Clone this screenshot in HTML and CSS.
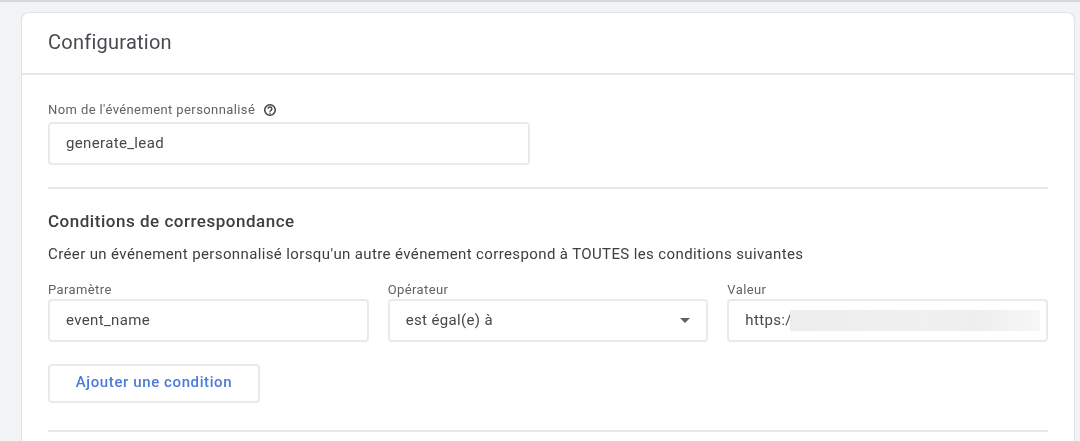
FILE: index.html
```html
<!DOCTYPE html>
<html lang="fr">
<head>
    <meta charset="UTF-8">
    <title>Configuration</title>
    <link rel="stylesheet" href="styles.css">
</head>
<body>
    <div class="card">
        <h2 class="card-title">Configuration</h2>

        <div class="card-body">
            <section class="section section-name">
                <div class="field field-name">
                    <div class="field-label">
                        Nom de l'événement personnalisé
                        <svg class="help-icon" viewBox="0 0 24 24" width="14" height="14" aria-hidden="true">
                            <circle cx="12" cy="12" r="9" fill="none" stroke="#3c4043" stroke-width="2.6"/>
                            <path d="M8.8 10a3.2 3.2 0 1 1 4.9 2.7c-1 .6-1.7 1.1-1.7 2.3" fill="none" stroke="#3c4043" stroke-width="2.4"/>
                            <circle cx="12" cy="17.4" r="1.3" fill="#3c4043"/>
                        </svg>
                    </div>
                    <div class="input">generate_lead</div>
                </div>
            </section>

            <section class="section section-match">
                <h3 class="section-title">Conditions de correspondance</h3>
                <p class="section-desc">Créer un événement personnalisé lorsqu'un autre événement correspond à TOUTES les conditions suivantes</p>

                <div class="condition-row">
                    <div class="field">
                        <div class="field-label">Paramètre</div>
                        <div class="input">event_name</div>
                    </div>
                    <div class="field">
                        <div class="field-label">Opérateur</div>
                        <div class="input input-select">
                            est égal(e) à
                            <span class="caret"></span>
                        </div>
                    </div>
                    <div class="field">
                        <div class="field-label">Valeur</div>
                        <div class="input input-value">
                            https:/,
                            <span class="redacted"></span>
                        </div>
                    </div>
                </div>

                <button class="btn" type="button">Ajouter une condition</button>
            </section>
        </div>
    </div>
</body>
</html>
```

FILE: styles.css
```css
*{
    box-sizing: border-box;
}

html, body{
    height: 100%;
}

body{
    margin: 0;
    padding: 12px 5px 0 21px;
    background: #f1f3f4;
    border-top: 2px solid #d6d8db;
    font-family: Roboto, "Liberation Sans", sans-serif;
    color: #3c4043;
    overflow: hidden;
}

.card{
    height: 440px;
    margin-top: -2px;
    background: #fff;
    border: 1px solid #e0e2e5;
    border-bottom: none;
    border-radius: 8px 8px 0 0;
    filter: blur(.35px);
}

.card-title{
    margin: 0;
    height: 62px;
    padding: 0 26px;
    border-bottom: 2px solid #e6e8ea;
    font-size: 20px;
    font-weight: 400;
    line-height: 59px;
    letter-spacing: .25px;
    color: #474b50;
}

.card-body{
    padding: 0 26px;
}

.section{
    border-bottom: 2px solid #e6e8ea;
}

.section-name{
    height: 114px;
    padding-top: 26px;
}

.section-match{
    height: 243px;
    padding-top: 22px;
}

.field-name{
    width: 482px;
}

.field-label{
    display: flex;
    align-items: flex-start;
    gap: 8px;
    height: 21px;
    font-size: 13px;
    line-height: 18px;
    letter-spacing: .4px;
    color: #5f6368;
}

.help-icon{
    display: block;
    margin-top: 2px;
}

.input{
    position: relative;
    height: 43px;
    padding: 0 16px;
    border: 2px solid #e8eaec;
    border-radius: 4px;
    font-size: 15px;
    line-height: 38px;
    letter-spacing: .35px;
    color: #45494d;
}

.section-title{
    margin: 0;
    font-size: 17px;
    font-weight: 500;
    line-height: 20px;
    letter-spacing: .52px;
    color: #3c4043;
}

.section-desc{
    margin: 13px 0 0;
    font-size: 15px;
    line-height: 20px;
    letter-spacing: .38px;
    color: #3c4043;
}

.condition-row{
    display: grid;
    grid-template-columns: repeat(3, 1fr);
    gap: 19px;
    margin-top: 17px;
}

.condition-row .field-label{
    height: 18px;
}

.caret{
    position: absolute;
    right: 16px;
    top: 17px;
    border-left: 5px solid transparent;
    border-right: 5px solid transparent;
    border-top: 5px solid #5f6368;
}

.redacted{
    position: absolute;
    left: 61px;
    top: 9px;
    width: 250px;
    height: 21px;
    background: linear-gradient(90deg, #ededed 0%, #f0f0f0 55%, #eeeeee 75%, #f7f7f7 100%);
}

.btn{
    display: block;
    width: 212px;
    height: 39px;
    margin-top: 22px;
    padding: 0 0 3px;
    background: #fff;
    border: 2px solid #e8eaec;
    border-radius: 4px;
    font-family: inherit;
    font-size: 15px;
    font-weight: 500;
    letter-spacing: .6px;
    color: #4a7bdc;
}
```
